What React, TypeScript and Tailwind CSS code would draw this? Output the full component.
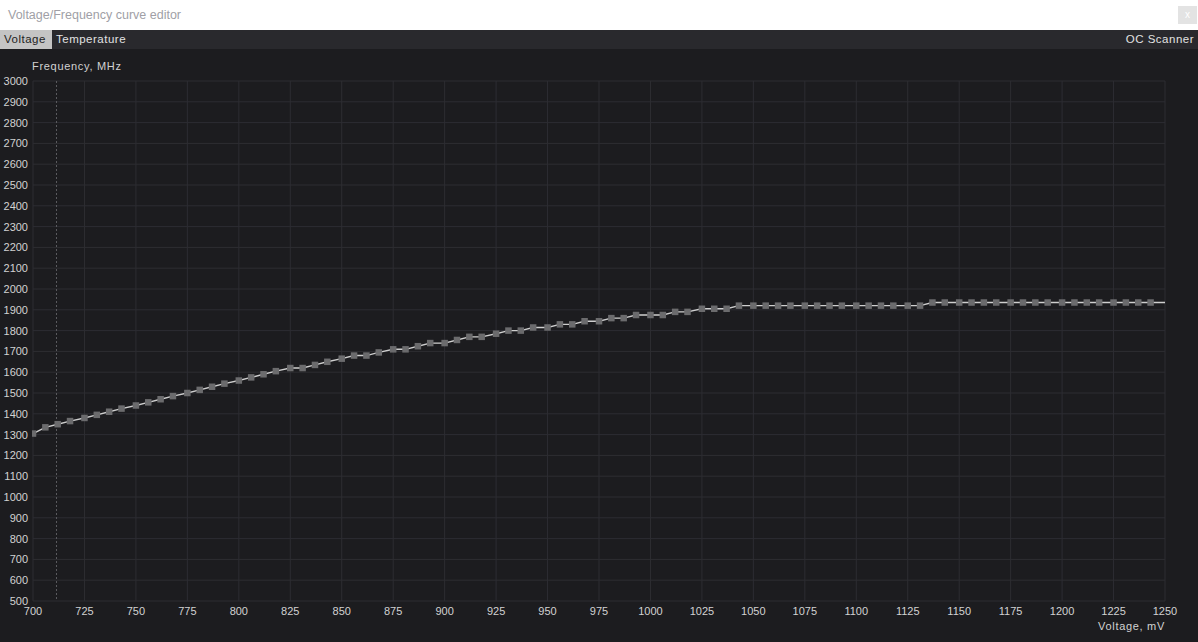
import React from "react";

const X0 = 33;
const X1 = 1165;
const PX_PER_MV = (X1 - X0) / 550;
const yOf = (f: number) => 552 - (f - 500) * 0.208;
const xOf = (v: number) => X0 + (v - 700) * PX_PER_MV;

const FREQS: number[] = [
  1305, 1335, 1350, 1365, 1380, 1395, 1410, 1425, 1440, 1455, 1470, 1485, 1500, 1515, 1530, 1545, 1560, 1575,
  1590, 1605, 1620, 1620, 1635, 1650, 1665, 1680, 1680, 1695, 1710, 1710, 1725, 1740, 1740, 1755, 1770, 1770,
  1785, 1800, 1800, 1815, 1815, 1830, 1830, 1845, 1845, 1860, 1860, 1875, 1875, 1875, 1890, 1890, 1905, 1905,
  1905,
];
while (FREQS.length < 70) FREQS.push(1920);
while (FREQS.length < 88) FREQS.push(1935);

const POINTS = FREQS.map((f, i) => ({ x: xOf(Math.floor(700 + 6.25 * i)), y: yOf(f) }));

const Y_TICKS = Array.from({ length: 26 }, (_, i) => 500 + i * 100);
const X_TICKS = Array.from({ length: 23 }, (_, i) => 700 + i * 25);

function Chart() {
  const last = POINTS[POINTS.length - 1];
  const linePts = [...POINTS.map((p) => `${p.x},${p.y}`), `${X1},${last.y}`].join(" ");
  return (
    <svg width={1198} height={593} className="block" fontFamily="'Liberation Sans', Arial, sans-serif">
      <defs>
        <clipPath id="plot">
          <rect x={X0 - 1} y={0} width={X1 - X0 + 2} height={593} />
        </clipPath>
      </defs>
      {Y_TICKS.map((f) => (
        <line key={`h${f}`} x1={X0} x2={X1} y1={yOf(f)} y2={yOf(f)} stroke="#2d2d32" strokeWidth={1} />
      ))}
      {X_TICKS.map((v) => (
        <line key={`v${v}`} x1={xOf(v)} x2={xOf(v)} y1={yOf(3000)} y2={yOf(500)} stroke="#2d2d32" strokeWidth={1} />
      ))}
      <line x1={56.5} x2={56.5} y1={yOf(3000)} y2={yOf(500)} stroke="#5a5a5e" strokeWidth={1} strokeDasharray="2 2" />
      {Y_TICKS.map((f) => (
        <text key={`yl${f}`} x={28} y={yOf(f)} textAnchor="end" dominantBaseline="central" fontSize={11} fill="#d2d2d2">
          {f}
        </text>
      ))}
      {X_TICKS.map((v) => (
        <text key={`xl${v}`} x={xOf(v)} y={562} textAnchor="middle" dominantBaseline="central" fontSize={11} fill="#d2d2d2">
          {v}
        </text>
      ))}
      <text x={32} y={17} dominantBaseline="central" fontSize={11} fill="#d2d2d2" letterSpacing={0.7}>
        Frequency, MHz
      </text>
      <text x={1165} y={577} textAnchor="end" dominantBaseline="central" fontSize={11} fill="#d2d2d2" letterSpacing={0.7}>
        Voltage, mV
      </text>
      <g clipPath="url(#plot)">
        <polyline points={linePts} fill="none" stroke="#cfcfcf" strokeWidth={1.4} />
        {POINTS.map((p, i) => (
          <rect key={i} x={p.x - 3.25} y={p.y - 3.25} width={6.5} height={6.5} fill="#6b6b6d" />
        ))}
      </g>
    </svg>
  );
}

export default function App() {
  return (
    <div className="w-[1198px] h-[642px] flex flex-col overflow-hidden font-['Liberation_Sans',Arial,sans-serif] bg-[#1c1c1f]">
      <div className="h-[30px] bg-white flex items-center justify-between pl-[8px] pr-[1px]">
        <span className="text-[12.5px] text-[#a09fa6]">Voltage/Frequency curve editor</span>
        <div className="w-[19px] h-[18px] bg-[#e3e3e3] flex items-center justify-center text-white text-[10px] leading-none">
          x
        </div>
      </div>
      <div className="h-[19px] bg-[#29292d] flex items-stretch text-[11.5px] tracking-[0.5px]">
        <div className="w-[52px] bg-[#c4c4c4] text-[#1e1e1e] flex items-center pl-[4px]">Voltage</div>
        <div className="text-[#e2e2e2] flex items-center pl-[4px]">Temperature</div>
        <div className="flex-1" />
        <div className="text-[#e2e2e2] flex items-center pr-[4px]">OC Scanner</div>
      </div>
      <div className="flex-1 bg-[#1c1c1f]">
        <Chart />
      </div>
    </div>
  );
}
